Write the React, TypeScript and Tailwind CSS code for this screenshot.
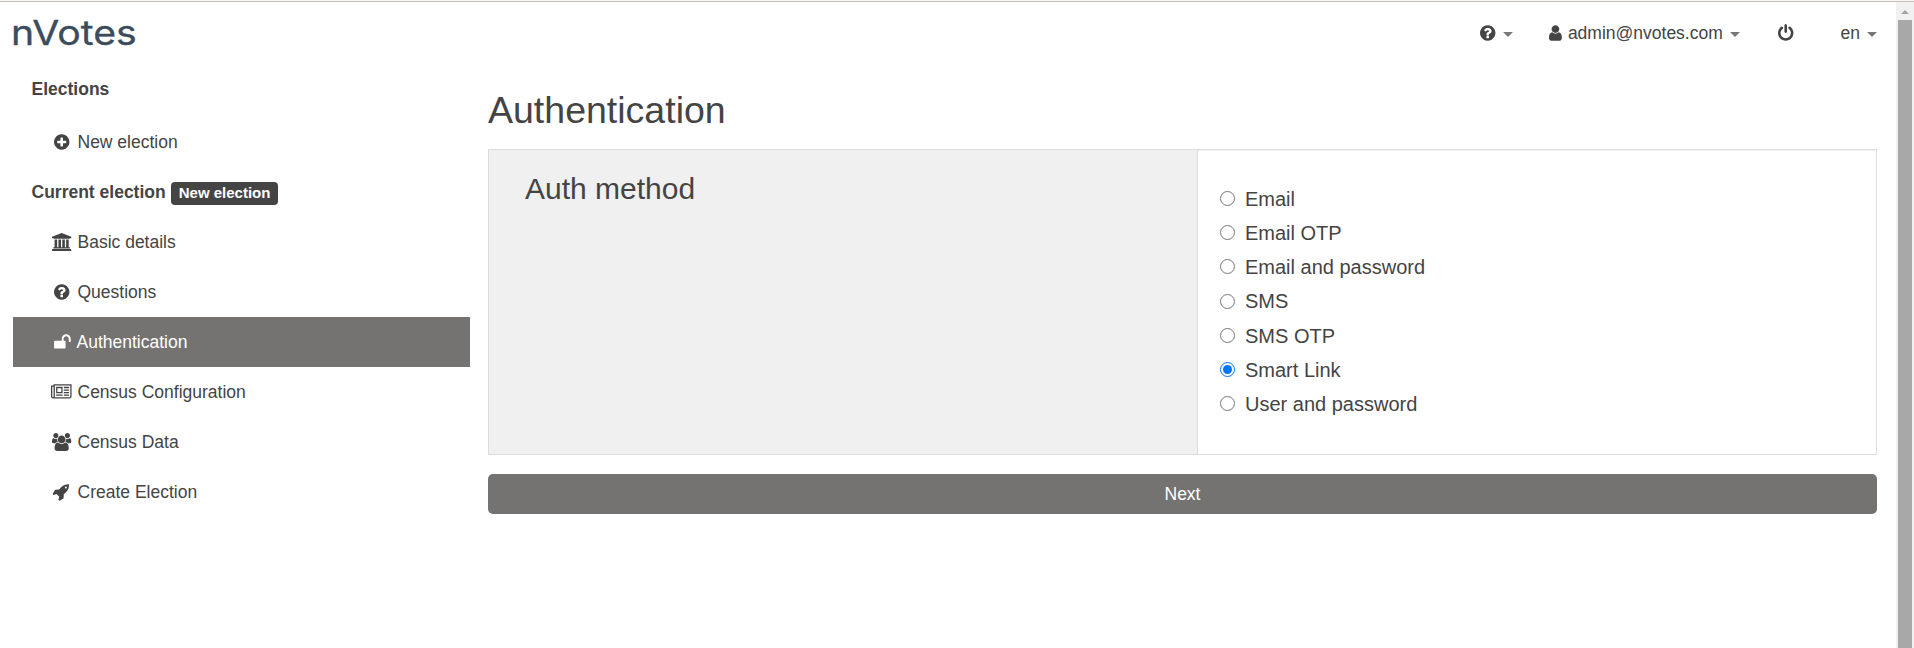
import type { ReactNode } from "react";

const CIRCLE =
  "q0 209-103 385.5t-279.5 279.5-385.5 103-385.5-103-279.5-279.5-103-385.5 103-385.5 279.5-279.5 385.5-103 385.5 103 279.5 279.5 103 385.5z";

const ICONS = {
  plus: {
    x: 128,
    w: 1536,
    d:
      "M1344 960v-128q0-26-19-45t-45-19h-256v-256q0-26-19-45t-45-19h-128q-26 0-45 19t-19 45v256h-256q-26 0-45 19t-19 45v128q0 26 19 45t45 19h256v256q0 26 19 45t45 19h128q26 0 45-19t19-45v-256h256q26 0 45-19t19-45zm320-64" +
      CIRCLE,
  },
  question: {
    x: 128,
    w: 1536,
    d:
      "M1024 1376v-192q0-14-9-23t-23-9h-192q-14 0-23 9t-9 23v192q0 14 9 23t23 9h192q14 0 23-9t9-23zm256-672q0-88-55.5-163t-138.5-116-170-41q-243 0-371 213-15 24 8 42l132 100q7 6 19 6 16 0 25-12 53-68 86-92 34-24 86-24 48 0 85.5 26t37.5 59q0 38-20 61t-68 45q-63 28-115.5 86.5t-52.5 125.5v36q0 14 9 23t23 9h192q14 0 23-9t9-23q0-19 21.5-49.5t54.5-49.5q32-18 49-28.5t46-35 44.5-48 28-60.5 12.5-81zm384 192" +
      CIRCLE,
  },
  unlock: {
    x: 64,
    w: 1664,
    d: "M1728 576v256q0 26-19 45t-45 19h-64q-26 0-45-19t-19-45v-256q0-106-75-181t-181-75-181 75-75 181v192h96q40 0 68 28t28 68v576q0 40-28 68t-68 28h-960q-40 0-68-28t-28-68v-576q0-40 28-68t68-28h672v-192q0-185 131.5-316.5t316.5-131.5 316.5 131.5 131.5 316.5z",
  },
  bank: {
    x: 0,
    w: 1920,
    d: "M960 0l960 384v128h-128q0 26-20.5 45t-48.5 19h-1526q-28 0-48.5-19t-20.5-45h-128v-128zm-704 640h256v768h128v-768h256v768h128v-768h256v768h128v-768h256v768h59q28 0 48.5 19t20.5 45v64h-1664v-64q0-26 20.5-45t48.5-19h59v-768zm1595 960q28 0 48.5 19t20.5 45v128h-1920v-128q0-26 20.5-45t48.5-19h1782z",
  },
  newspaper: {
    x: 0,
    w: 2048,
    d: "M1024 512h-384v384h384v-384zm128 640v128h-640v-128h640zm0-768v640h-640v-640h640zm640 768v128h-512v-128h512zm0-256v128h-512v-128h512zm0-256v128h-512v-128h512zm0-256v128h-512v-128h512zm-1536 960v-960h-128v960q0 26 19 45t45 19 45-19 19-45zm1664 0v-1088h-1536v1088q0 33-11 64h1483q26 0 45-19t19-45zm128-1216v1216q0 80-56 136t-136 56h-1664q-80 0-136-56t-56-136v-1088h256v-128h1792z",
  },
  users: {
    x: -64,
    w: 1920,
    d: "M529 896q-162 5-265 128h-134q-82 0-138-40.5t-56-118.5q0-353 124-353 6 0 43.5 21t97.5 42.5 119 21.5q67 0 133-23-5 37-5 66 0 139 81 256zm1071 637q0 120-73 189.5t-194 69.5h-874q-121 0-194-69.5t-73-189.5q0-53 3.5-103.5t14-109 26.5-108.5 43-97.5 62-81 85.5-53.5 111.5-20q10 0 43 21.5t73 48 107 48 135 21.5 135-21.5 107-48 73-48 43-21.5q61 0 111.5 20t85.5 53.5 62 81 43 97.5 26.5 108.5 14 109 3.5 103.5zm-1024-1277q0 106-75 181t-181 75-181-75-75-181 75-181 181-75 181 75 75 181zm704 384q0 159-112.5 271.5t-271.5 112.5-271.5-112.5-112.5-271.5 112.5-271.5 271.5-112.5 271.5 112.5 112.5 271.5zm576 225q0 78-56 118.5t-138 40.5h-134q-103-123-265-128 81-117 81-256 0-29-5-66 66 23 133 23 59 0 119-21.5t97.5-42.5 43.5-21q124 0 124 353zm-128-609q0 106-75 181t-181 75-181-75-75-181 75-181 181-75 181 75 75 181z",
  },
  rocket: {
    x: 64,
    w: 1664,
    d: "M1440 448q0-40-28-68t-68-28-68 28-28 68 28 68 68 28 68-28 28-68zm224-288q0 249-75.5 430.5t-253.5 360.5q-81 80-195 176l-20 379q-2 16-16 26l-384 224q-7 4-16 4-12 0-23-9l-64-64q-13-14-8-32l85-276-281-281-276 85q-3 1-9 1-14 0-23-9l-64-64q-17-19-5-39l224-384q10-14 26-16l379-20q96-114 176-195 188-187 358-258t431-71q14 0 24 9.5t10 22.5z",
  },
  user: {
    x: 256,
    w: 1280,
    d: "M1536 1399q0 109-62.5 187t-150.5 78h-854q-88 0-150.5-78t-62.5-187q0-85 8.5-160.5t31.5-152 58.5-131 94-89 134.5-34.5q131 128 313 128t313-128q76 0 134.5 34.5t94 89 58.5 131 31.5 152 8.5 160.5zm-256-887q0 159-112.5 271.5t-271.5 112.5-271.5-112.5-112.5-271.5 112.5-271.5 271.5-112.5 271.5 112.5 112.5 271.5z",
  },
  power: {
    x: 128,
    w: 1536,
    d: "M1664 896q0 156-61 298t-164 245-245 164-298 61-298-61-245-164-164-245-61-298q0-182 80.5-343t226.5-270q43-32 95.5-25t83.5 50q32 42 24.5 94.5t-49.5 84.5q-98 74-151.5 181t-53.5 228q0 104 40.5 198.5t109.5 163.5 163.5 109.5 198.5 40.5 198.5-40.5 163.5-109.5 109.5-163.5 40.5-198.5q0-121-53.5-228t-151.5-181q-42-32-49.5-84.5t24.5-94.5q31-43 84-50t95 25q146 109 226.5 270t80.5 343zm-640-768v640q0 52-38 90t-90 38-90-38-38-90v-640q0-52 38-90t90-38 90 38 38 90z",
  },
};

type IconName = keyof typeof ICONS;

function Icon({ name }: { name: IconName }) {
  const { x, w, d } = ICONS[name];
  return (
    <svg viewBox={`${x} 0 ${w} 1792`} className="h-[18px] w-auto shrink-0 overflow-visible" fill="currentColor">
      <path d={d} />
    </svg>
  );
}

function Caret() {
  return (
    <svg viewBox="0 0 10 5" className="mt-[3px] h-[5px] w-2.5 shrink-0 text-[#777]" fill="currentColor">
      <path d="M0 0h10L5 5z" />
    </svg>
  );
}

const ITEMS: { icon: IconName; label: string; active?: boolean }[] = [
  { icon: "bank", label: "Basic details" },
  { icon: "question", label: "Questions" },
  { icon: "unlock", label: "Authentication", active: true },
  { icon: "newspaper", label: "Census Configuration" },
  { icon: "users", label: "Census Data" },
  { icon: "rocket", label: "Create Election" },
];

const METHODS = ["Email", "Email OTP", "Email and password", "SMS", "SMS OTP", "Smart Link", "User and password"];

function NavItem({ icon, label, active }: { icon: IconName; label: string; active?: boolean }) {
  return (
    <li
      className={
        active
          ? "flex h-[50px] items-center gap-[3.5px] bg-[#757371] pl-[38px] text-white"
          : "flex h-[50px] items-center gap-[5px] pl-[37.5px]"
      }
    >
      <span className="flex w-[22px] justify-center">
        <Icon name={icon} />
      </span>
      {label}
    </li>
  );
}

function Heading({ children }: { children: ReactNode }) {
  return <div className="flex h-[50px] items-center pl-[18.5px] font-bold">{children}</div>;
}

export default function App() {
  return (
    <div className="flex h-[648px] flex-col overflow-hidden bg-white font-['Liberation_Sans',Arial,sans-serif] text-[17.5px] leading-[25px] text-[#444]">
      <div className="h-0.5 shrink-0 border-b border-[#c9c1b9] bg-[#f8f6f4]" />
      <div className="flex min-h-0 flex-1">
        <div className="flex min-w-0 flex-1 flex-col">
          <header className="flex h-[62px] shrink-0 items-center justify-between pr-[19px] pl-[11px]">
            <div className="origin-left scale-x-[1.14] font-['Inter',sans-serif] text-[34.4px] leading-[40px] text-[#3c4c5c] [-webkit-text-stroke:0.3px_#3c4c5c]">
              nVotes
            </div>
            <nav className="flex items-center">
              <div className="flex w-[69px] items-center gap-2">
                <Icon name="question" />
                <Caret />
              </div>
              <div className="flex w-[228px] items-center">
                <Icon name="user" />
                <span className="mr-[7px] ml-[6.5px]">admin@nvotes.com</span>
                <Caret />
              </div>
              <div className="w-[63px] pl-px">
                <Icon name="power" />
              </div>
              <div className="flex items-center gap-2">
                <span className="-mr-px pl-px">en</span>
                <Caret />
              </div>
            </nav>
          </header>
          <div className="flex flex-1 items-start pr-[19px] pl-[13px]">
            <aside className="mr-[18px] w-[457px] shrink-0">
              <Heading>Elections</Heading>
              <ul className="pt-[3px]">
                <NavItem icon="plus" label="New election" />
              </ul>
              <Heading>
                Current election
                <span className="mt-0.5 ml-[5px] flex h-[23px] items-center rounded-[4px] bg-[#444] px-2 pb-0.5 text-[15px] leading-[15px] text-white">
                  New election
                </span>
              </Heading>
              <ul>
                {ITEMS.map((item) => (
                  <NavItem key={item.label} {...item} />
                ))}
              </ul>
            </aside>
            <main className="min-w-0 flex-1 pt-[26px]">
              <h1 className="mb-[18px] text-[37.5px] leading-[41px]">Authentication</h1>
              <section className="flex h-[306px] border border-[#ddd]">
                <div className="w-[709px] shrink-0 border-r border-[#ddd] bg-[#f0f0f0] pt-[22px] pl-9">
                  <h2 className="text-[30px] leading-[33px]">Auth method</h2>
                </div>
                <div className="flex flex-1 flex-col border-t border-[#efefef] pt-[31px] pl-[22px] text-[20px]">
                  {METHODS.map((method) => (
                    <label key={method} className="flex h-[34.25px] items-center gap-2.5">
                      <input
                        type="radio"
                        name="method"
                        defaultChecked={method === "Smart Link"}
                        className="m-0 -mt-[1.5px] size-[15px] shrink-0"
                      />
                      {method}
                    </label>
                  ))}
                </div>
              </section>
              <button className="mt-[19px] block h-10 w-full rounded-[5px] bg-[#757371] text-white">Next</button>
            </main>
          </div>
        </div>
        <div className="flex w-[18px] shrink-0 flex-col items-center bg-[#f1f1f1]">
          <svg viewBox="0 0 18 18" className="size-[18px] shrink-0 text-[#a3a3a3]" fill="currentColor">
            <path d="M5 12h8L9 8z" />
          </svg>
          <div className="w-3.5 flex-1 bg-[#a8a8a8]" />
        </div>
      </div>
    </div>
  );
}
